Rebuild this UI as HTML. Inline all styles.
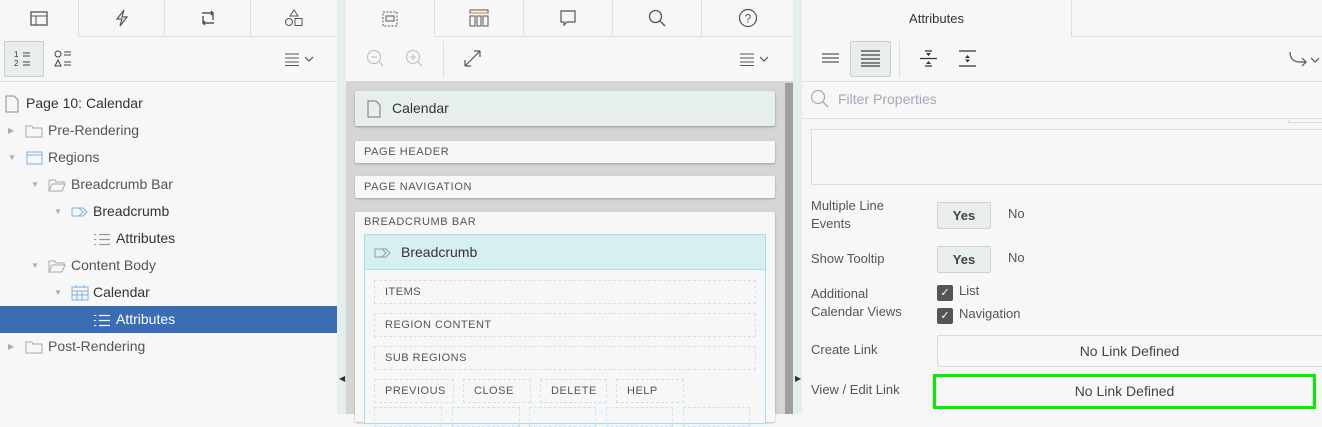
<!DOCTYPE html><html><head><style>
*{box-sizing:border-box;margin:0;padding:0}
body{width:1322px;height:414px;overflow:hidden;background:#f7f7f7;font-family:"Liberation Sans",sans-serif;color:#333;position:relative;font-size:14px}
.a{position:absolute}
.tab{position:absolute;top:0;height:37px;border-right:1px solid #e0e0e0;border-bottom:1px solid #e0e0e0;display:flex;align-items:center;justify-content:center}
.tab.on{border-bottom:none}
.row{position:absolute;left:0;width:337px;height:27px;line-height:27px;font-size:14px;color:#555}
.tri{position:absolute;font-size:8px;color:#aaa}
.dash{position:absolute;border:1px dashed #c8e4f4;font-size:11px;letter-spacing:.5px;color:#555;padding-left:10px;line-height:22px}
.sec{position:absolute;left:355px;width:420px;background:#f7f7f7;border-radius:2px;box-shadow:0 1px 2px rgba(0,0,0,.25);font-size:11px;letter-spacing:.6px;color:#555;padding-left:9px;line-height:22px}
.lbl{position:absolute;left:811px;font-size:13px;color:#555;line-height:18px}
.yes{position:absolute;left:937px;width:54px;height:27px;background:#e8eeee;border:1px solid #d0d0d0;border-radius:2px;font-weight:bold;font-size:13px;text-align:center;line-height:25px;color:#444}
.cb{position:absolute;left:937px;width:16px;height:16px;background:#555;border-radius:2px;color:#fff;font-size:11px;text-align:center;line-height:16px}
</style></head><body>
<div class="tab on" style="left:0;width:79px"><svg width="18" height="16"><rect x="1" y="1" width="16" height="13" fill="none" stroke="#555" stroke-width="1.3"/><line x1="1" y1="5" x2="17" y2="5" stroke="#555"/><line x1="6" y1="5" x2="6" y2="14" stroke="#555"/></svg></div>
<div class="tab" style="left:79px;width:86px"><svg width="18" height="18"><path d="M11 1L4 10h5l-2 7 7-9H9z" fill="none" stroke="#555" stroke-width="1.2"/></svg></div>
<div class="tab" style="left:165px;width:86px"><svg width="20" height="18"><path d="M4 4h11v7M16 14H5V7M13 2l2 2-2 2M7 12l-2 2 2 2" fill="none" stroke="#555" stroke-width="1.4"/></svg></div>
<div class="tab" style="left:251px;width:86px;border-right:none"><svg width="20" height="18"><path d="M10 1l4 6H6z" fill="none" stroke="#555"/><circle cx="5" cy="13" r="3.5" fill="none" stroke="#555"/><rect x="11" y="9.5" width="7" height="7" fill="none" stroke="#555"/></svg></div>
<div class="a" style="left:4px;top:41px;width:40px;height:36px;background:#e8eeee;border:1px solid #ccc;border-radius:2px"></div>
<svg class="a" style="left:14px;top:50px" width="20" height="18"><text x="0" y="7" font-size="8" fill="#333" font-family="Liberation Sans">1</text><text x="0" y="16" font-size="8" fill="#333" font-family="Liberation Sans">2</text><path d="M9 3h7M9 6h7M9 12h7M9 15h7" stroke="#444"/></svg>
<svg class="a" style="left:54px;top:50px" width="20" height="18"><circle cx="4" cy="4" r="3" fill="none" stroke="#444"/><path d="M4 10l3 6H1z" fill="none" stroke="#444"/><path d="M10 2h7M10 5h7M10 12h7M10 15h7" stroke="#444"/></svg>
<svg class="a" style="left:285px;top:52px" width="32" height="14"><path d="M0 2h14M0 6h14M0 10h14M0 13.5h14" stroke="#555"/><path d="M20 5l4 4 4-4" fill="none" stroke="#555" stroke-width="1.2"/></svg>
<div class="a" style="left:0;top:81px;width:337px;height:1px;background:#e0e0e0"></div>
<div class="row" style="top:90px;color:#333"><svg class="a" style="left:5px;top:5px" width="14" height="18"><path d="M1 1h8l4 4v12H1z" fill="none" stroke="#888"/></svg><span style="margin-left:26px">Page 10: Calendar</span></div>
<div class="row" style="top:117px"><span class="tri" style="left:8px">▶</span><svg class="a" style="left:25px;top:7px" width="18" height="14"><path d="M1 2h6l1 2h9v9H1z" fill="none" stroke="#aaa"/></svg><span style="margin-left:48px">Pre-Rendering</span></div>
<div class="row" style="top:144px"><span class="tri" style="left:8px">▼</span><svg class="a" style="left:26px;top:7px" width="17" height="14"><rect x="1" y="1" width="15" height="12" fill="none" stroke="#7ab0e6"/><line x1="1" y1="4" x2="16" y2="4" stroke="#7ab0e6"/></svg><span style="margin-left:48px">Regions</span></div>
<div class="row" style="top:171px"><span class="tri" style="left:31px">▼</span><svg class="a" style="left:48px;top:7px" width="18" height="14"><path d="M1 2h6l1 2h8v2M1 2v11h13l3-7H4l-3 7" fill="none" stroke="#aaa"/></svg><span style="margin-left:71px">Breadcrumb Bar</span></div>
<div class="row" style="top:198px;color:#333"><span class="tri" style="left:54px">▼</span><svg class="a" style="left:71px;top:9px" width="18" height="10"><path d="M1 1h11l4 4-4 4H1zM8 1l4 4-4 4" fill="none" stroke="#7ab0e6"/></svg><span style="margin-left:93px">Breadcrumb</span></div>
<div class="row" style="top:225px;color:#333"><svg class="a" style="left:94px;top:7px" width="17" height="14"><path d="M1 2v1M1 7v1M1 12v1" stroke="#999" stroke-width="2.5"/><path d="M5 2.5h11M5 7.5h11M5 12.5h11" stroke="#999" stroke-width="1.2"/></svg><span style="margin-left:116px">Attributes</span></div>
<div class="row" style="top:252px"><span class="tri" style="left:31px">▼</span><svg class="a" style="left:48px;top:7px" width="18" height="14"><path d="M1 2h6l1 2h8v2M1 2v11h13l3-7H4l-3 7" fill="none" stroke="#aaa"/></svg><span style="margin-left:71px">Content Body</span></div>
<div class="row" style="top:279px;color:#333"><span class="tri" style="left:54px">▼</span><svg class="a" style="left:71px;top:6px" width="18" height="16"><rect x="1" y="2" width="16" height="13" fill="none" stroke="#7ab0e6"/><path d="M1 6h16M1 10h16M6 6v9M11 6v9M5 0v3M13 0v3" stroke="#7ab0e6"/></svg><span style="margin-left:93px">Calendar</span></div>
<div class="row" style="top:306px;background:#3a6db4;color:#fff"><svg class="a" style="left:94px;top:7px" width="17" height="14"><path d="M1 2v1M1 7v1M1 12v1" stroke="#fff" stroke-width="2.5"/><path d="M5 2.5h11M5 7.5h11M5 12.5h11" stroke="#fff" stroke-width="1.3"/></svg><span style="margin-left:116px">Attributes</span></div>
<div class="row" style="top:333px"><span class="tri" style="left:8px">▶</span><svg class="a" style="left:25px;top:7px" width="18" height="14"><path d="M1 2h6l1 2h9v9H1z" fill="none" stroke="#aaa"/></svg><span style="margin-left:48px">Post-Rendering</span></div>
<div class="a" style="left:337px;top:0;width:9px;height:414px;background:#e6eded"></div>
<div class="a" style="left:339px;top:374px;font-size:8px;color:#333">◀</div>
<div class="a" style="left:793px;top:0;width:9px;height:414px;background:#e6eded"></div>
<div class="a" style="left:795px;top:374px;font-size:8px;color:#333">▶</div>
<div class="a" style="left:346px;top:0;width:447px;height:81px;background:#f7f7f7"></div>
<div class="tab on" style="left:346px;width:89px"><svg width="18" height="18"><rect x="2" y="2" width="14" height="14" fill="none" stroke="#555" stroke-dasharray="2 1.5"/><rect x="5" y="6" width="8" height="5" fill="none" stroke="#555"/></svg></div>
<div class="tab" style="left:435px;width:89px"><svg width="20" height="18"><rect x="1" y="1" width="18" height="3" fill="none" stroke="#555"/><rect x="1" y="7" width="5" height="10" fill="none" stroke="#555"/><rect x="8" y="7" width="4" height="10" fill="none" stroke="#555"/><rect x="14" y="7" width="5" height="10" fill="none" stroke="#555"/><path d="M1 4h18" stroke="#d0801a"/></svg></div>
<div class="tab" style="left:524px;width:89px"><svg width="18" height="18"><path d="M2 2h14v11H8l-3 3v-3H2z" fill="none" stroke="#555" stroke-width="1.2"/></svg></div>
<div class="tab" style="left:613px;width:89px"><svg width="18" height="18"><circle cx="7.5" cy="7.5" r="6" fill="none" stroke="#555" stroke-width="1.3"/><path d="M12 12l5 5" stroke="#555" stroke-width="1.4"/></svg></div>
<div class="tab" style="left:702px;width:91px;border-right:none"><svg width="20" height="20"><circle cx="10" cy="10" r="8.5" fill="none" stroke="#555" stroke-width="1.2"/><text x="10" y="14.5" font-size="12" text-anchor="middle" fill="#555" font-family="Liberation Sans">?</text></svg></div>
<svg class="a" style="left:366px;top:49px" width="20" height="20"><circle cx="8" cy="8" r="6.5" fill="none" stroke="#bbb"/><path d="M5 8h6M13 13l4 4" stroke="#bbb"/></svg>
<svg class="a" style="left:405px;top:49px" width="20" height="20"><circle cx="8" cy="8" r="6.5" fill="none" stroke="#bbb"/><path d="M5 8h6M8 5v6M13 13l4 4" stroke="#bbb"/></svg>
<div class="a" style="left:443px;top:41px;width:1px;height:36px;background:#e0e0e0"></div>
<svg class="a" style="left:463px;top:50px" width="20" height="18"><path d="M2 16L17 1M2 16v-6M2 16h6M17 1h-6M17 1v6" fill="none" stroke="#555" stroke-width="1.2"/></svg>
<svg class="a" style="left:740px;top:52px" width="32" height="14"><path d="M0 2h14M0 6h14M0 10h14M0 13.5h14" stroke="#555"/><path d="M20 5l4 4 4-4" fill="none" stroke="#555" stroke-width="1.2"/></svg>
<div class="a" style="left:346px;top:81px;width:447px;height:333px;background:#d5d5d5"></div>
<div class="a" style="left:785px;top:83px;width:8px;height:331px;background:#9f9f9f"></div>
<div class="a" style="left:355px;top:91px;width:420px;height:35px;background:#e6eeee;border-radius:2px;box-shadow:0 1px 2px rgba(0,0,0,.3);font-size:14px;line-height:35px;padding-left:37px;color:#333">Calendar<svg class="a" style="left:12px;top:9px" width="14" height="18"><path d="M1 1h8l4 4v12H1z" fill="none" stroke="#777"/></svg></div>
<div class="sec" style="top:141px;height:22px">PAGE HEADER</div>
<div class="sec" style="top:176px;height:22px">PAGE NAVIGATION</div>
<div class="sec" style="top:212px;height:210px;line-height:20px">BREADCRUMB BAR</div>
<div class="a" style="left:364px;top:234px;width:402px;height:190px;border:1px solid #a8dcf0;background:#f7f7f7"></div>
<div class="a" style="left:365px;top:235px;width:400px;height:35px;background:#d6eff0;border-bottom:1px solid #b0def0;font-size:14px;line-height:34px;padding-left:36px;color:#333">Breadcrumb<svg class="a" style="left:9px;top:13px" width="18" height="10"><path d="M1 1h11l4 4-4 4H1zM8 1l4 4-4 4" fill="none" stroke="#999"/></svg></div>
<div class="dash" style="left:374px;top:280px;width:382px;height:24px">ITEMS</div>
<div class="dash" style="left:374px;top:313px;width:382px;height:24px">REGION CONTENT</div>
<div class="dash" style="left:374px;top:346px;width:382px;height:24px">SUB REGIONS</div>
<div class="dash" style="left:374px;top:379px;width:80px;height:24px">PREVIOUS</div>
<div class="dash" style="left:463px;top:379px;width:68px;height:24px">CLOSE</div>
<div class="dash" style="left:540px;top:379px;width:67px;height:24px">DELETE</div>
<div class="dash" style="left:616px;top:379px;width:68px;height:24px">HELP</div>
<div class="dash" style="left:374px;top:407px;width:68px;height:20px"></div>
<div class="dash" style="left:452px;top:407px;width:68px;height:20px"></div>
<div class="dash" style="left:529px;top:407px;width:67px;height:20px"></div>
<div class="dash" style="left:606px;top:407px;width:67px;height:20px"></div>
<div class="dash" style="left:683px;top:407px;width:67px;height:20px"></div>
<div class="tab on" style="left:802px;width:270px;font-size:13px;color:#333">Attributes</div>
<div class="a" style="left:1072px;top:36px;width:250px;height:1px;background:#e0e0e0"></div>
<svg class="a" style="left:822px;top:53px" width="17" height="10"><path d="M0 1h17M0 5h17M0 9h17" stroke="#555" stroke-width="1.3"/></svg>
<div class="a" style="left:850px;top:41px;width:41px;height:36px;background:#e8eeee;border:1px solid #ccc;border-radius:2px"></div>
<svg class="a" style="left:861px;top:50px" width="19" height="17"><path d="M0 1h19M0 5h19M0 9h19M0 13h19M0 16h19" stroke="#444" stroke-width="1.3"/></svg>
<div class="a" style="left:899px;top:41px;width:1px;height:36px;background:#e0e0e0"></div>
<svg class="a" style="left:919px;top:50px" width="19" height="17"><path d="M1 8.5h17M6 1h7M6 16h7" stroke="#333" stroke-width="1.2"/><path d="M7 3h5l-2.5 3zM7 14h5l-2.5-3z" fill="#333"/></svg>
<svg class="a" style="left:958px;top:50px" width="19" height="17"><path d="M1 1h17M1 16h17" stroke="#333" stroke-width="1.2"/><path d="M7 8h5l-2.5-3zM7 9.5h5l-2.5 3z" fill="#333"/></svg>
<svg class="a" style="left:1288px;top:50px" width="34" height="18"><path d="M2 2q0 10 10 10h6M14 8l4 4-4 4" fill="none" stroke="#555" stroke-width="1.2"/><path d="M23 8l4 4 4-4" fill="none" stroke="#555" stroke-width="1.2"/></svg>
<div class="a" style="left:802px;top:81px;width:520px;height:1px;background:#e0e0e0"></div>
<svg class="a" style="left:810px;top:89px" width="20" height="20"><circle cx="8" cy="8" r="6.5" fill="none" stroke="#aaa" stroke-width="1.2"/><path d="M13 13l5 5" stroke="#aaa" stroke-width="1.3"/></svg>
<div class="a" style="left:838px;top:91px;font-size:14px;color:#a8a8b8">Filter Properties</div>
<div class="a" style="left:802px;top:118px;width:520px;height:1px;background:#e0e0e0"></div>
<div class="a" style="left:1288px;top:118px;width:34px;height:5px;border-left:1px solid #ddd;border-bottom:1px solid #ddd"></div>
<div class="a" style="left:811px;top:129px;width:515px;height:56px;border:1px solid #ddd;background:#f7f7f7"></div>
<div class="lbl" style="top:197px">Multiple Line<br>Events</div>
<div class="yes" style="top:202px">Yes</div>
<div class="a" style="left:1008px;top:206px;font-size:13px;color:#555">No</div>
<div class="lbl" style="top:250px">Show Tooltip</div>
<div class="yes" style="top:246px">Yes</div>
<div class="a" style="left:1008px;top:250px;font-size:13px;color:#555">No</div>
<div class="lbl" style="top:285px">Additional<br>Calendar Views</div>
<div class="cb" style="top:285px">✓</div><div class="a" style="left:959px;top:283px;font-size:13px;color:#555">List</div>
<div class="cb" style="top:308px">✓</div><div class="a" style="left:959px;top:306px;font-size:13px;color:#555">Navigation</div>
<div class="lbl" style="top:341px">Create Link</div>
<div class="a" style="left:937px;top:335px;width:390px;height:32px;border:1px solid #d8d8d8;border-radius:2px;text-align:center;line-height:30px;font-size:14px;color:#444;padding-right:5px">No Link Defined</div>
<div class="lbl" style="top:381px">View / Edit Link</div>
<div class="a" style="left:933px;top:374px;width:383px;height:35px;border:3px solid #00f000;text-align:center;line-height:29px;font-size:14px;color:#444">No Link Defined</div>
</body></html>
